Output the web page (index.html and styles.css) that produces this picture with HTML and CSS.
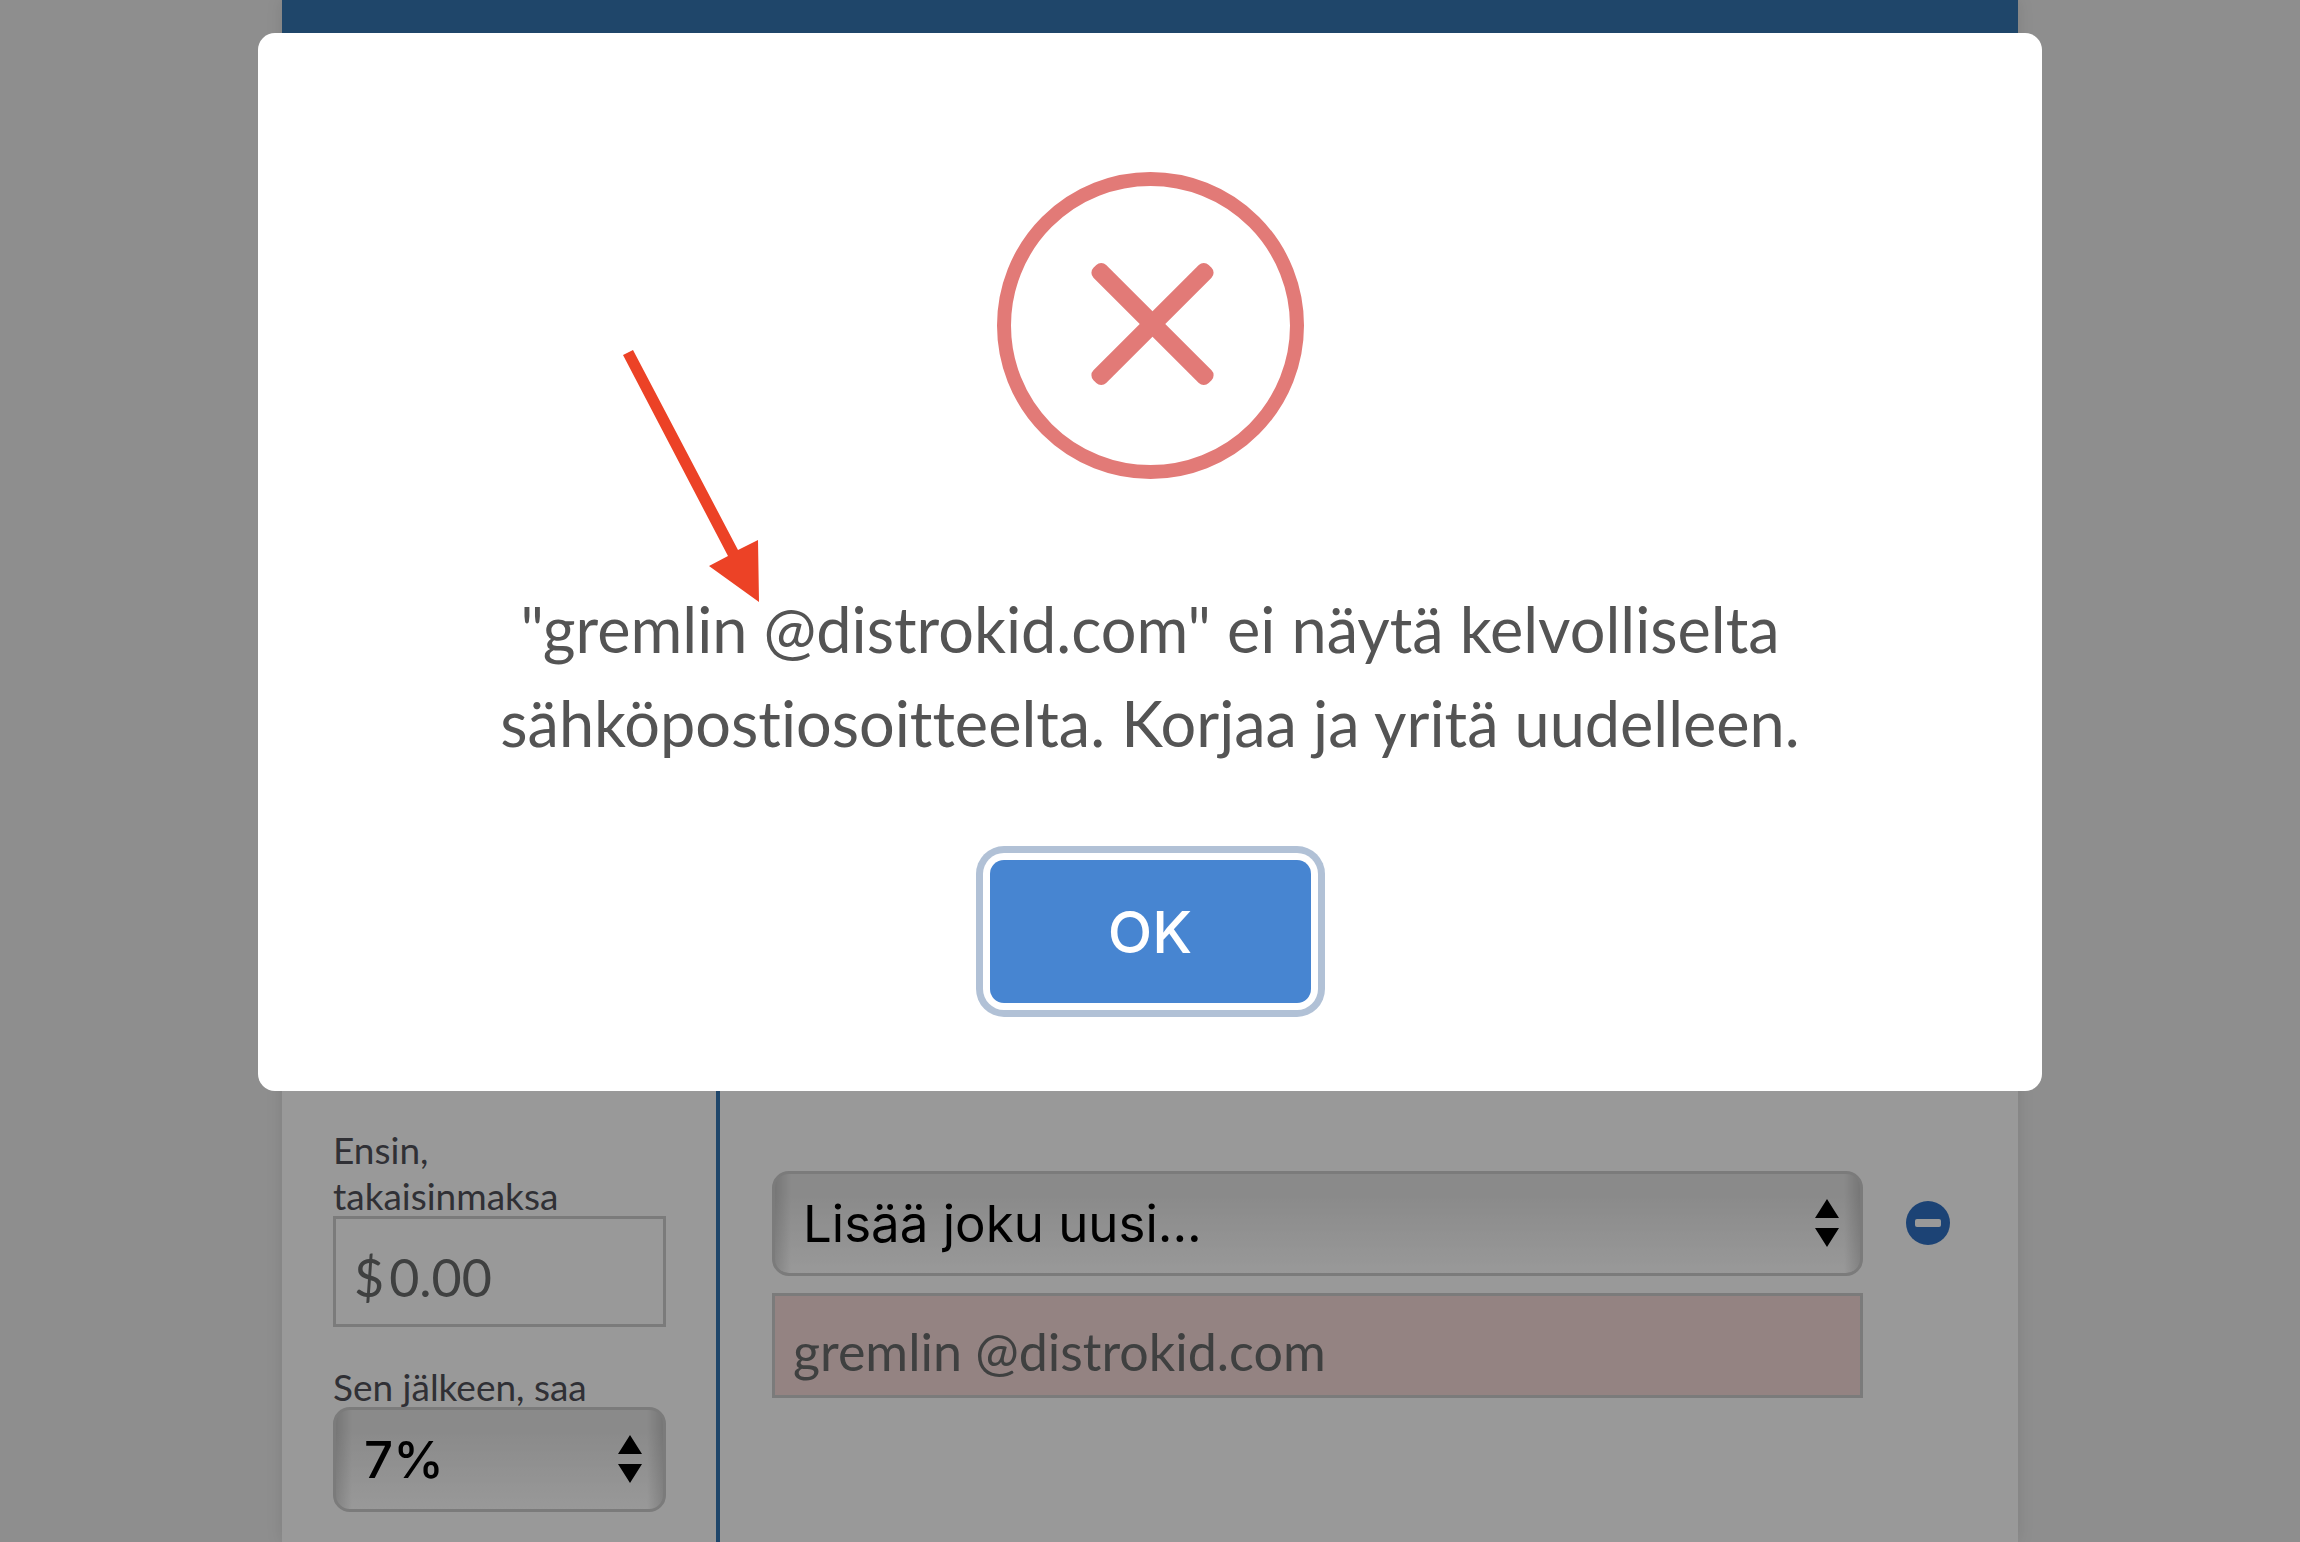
FILE: index.html
```
<!DOCTYPE html>
<html lang="fi">
<head>
    <meta charset="UTF-8">
    <meta name="viewport" content="width=device-width, initial-scale=1.0">
    <title>Splits</title>
    <link rel="stylesheet" href="styles.css">
</head>
<body>
    <div class="page">
        <div class="page-header"></div>
        <div class="split">
            <!-- Share -->
            <div class="share">
                <label class="label" for="recoup">Ensin,<br>takaisinmaksa</label>
                <div class="money">
                    <span>$</span>
                    <input type="text" id="recoup" value="0.00">
                </div>
                <label class="label" for="percent">Sen jälkeen, saa</label>
                <div class="select-box">
                    <select class="percent" id="percent">
                        <option>7%</option>
                    </select>
                    <svg class="arrows" viewBox="0 0 24 48">
                        <path d="M12 0L24 19H0zM12 48L24 29H0z"/>
                    </svg>
                </div>
            </div>
            <!-- Person -->
            <div class="person">
                <div class="person-fields">
                    <div class="select-box">
                        <select id="who" aria-label="Kuka">
                            <option>Lisää joku uusi...</option>
                        </select>
                        <svg class="arrows" viewBox="0 0 24 48">
                            <path d="M12 0L24 19H0zM12 48L24 29H0z"/>
                        </svg>
                    </div>
                    <input class="email error" type="text" aria-label="Sähköposti" value="gremlin @distrokid.com">
                </div>
                <button class="remove" aria-label="Poista">
                    <svg viewBox="0 0 44 44">
                        <circle cx="22" cy="22" r="22" fill="#2f70c3"/>
                        <rect x="9" y="18" width="26" height="8" rx="2" fill="#fff"/>
                    </svg>
                </button>
            </div>
        </div>
    </div>

    <div class="overlay">
        <div class="modal" role="dialog" aria-modal="true" aria-labelledby="message">
            <svg class="icon-error" viewBox="0 0 307 307">
                <circle cx="153.5" cy="153.5" r="146.5" fill="none" stroke="#e27a77" stroke-width="14"/>
                <g fill="#e27a77">
                    <rect x="74" y="143" width="163" height="18" rx="7" transform="rotate(45 155.500 152)"/>
                    <rect x="74" y="143" width="163" height="18" rx="7" transform="rotate(-45 155.500 152)"/>
                </g>
            </svg>
            <p class="message" id="message">"gremlin @distrokid.com" ei näytä kelvolliselta sähköpostiosoitteelta. Korjaa ja yritä uudelleen.</p>
            <button class="ok">OK</button>
            <svg class="pointer" viewBox="0 0 137 252">
                <path d="M0 5L10 0L115 200L135 190L136 252L86 216L105 206z" fill="#ec4226"/>
            </svg>
        </div>
    </div>
</body>
</html>
```
FILE: styles.css
```
* {
    box-sizing: border-box;
}
body {
    margin: 0;
    height: 100vh;
    overflow: hidden;
    background-color: #ededed;
    font-family: Lato, sans-serif;
    font-variant-ligatures: none;
    color: #505159;
}
input, select, button {
    font-family: inherit;
    margin: 0;
}

.page {
    display: flex;
    flex-direction: column;
    min-height: 100vh;
    margin: 0 282px;
    background-color: #fff;
    box-shadow: 0 0 16px rgba(0, 0, 0, 0.1);
}
.page-header {
    height: 100px;
    background-color: #3575b1;
}
.split {
    flex: 1;
    display: flex;
}
.share {
    width: 438px;
    padding: 1027px 50px 0 51px;
    border-right: 4px solid #3575b1;
}
.label {
    display: block;
    margin-bottom: -3px;
    font-size: 37px;
    line-height: 46px;
}
.money {
    display: flex;
    align-items: center;
    height: 111px;
    margin-bottom: 37px;
    padding: 10px 18px 0;
    border: 3px solid #cdcdcd;
    font-size: 52px;
    color: #696c6c;
}
.money input {
    width: 100%;
    min-width: 0;
    padding: 0 0 0 5px;
    border: 0;
    background: none;
    font-size: 52px;
    color: #696c6c;
}

.select-box {
    position: relative;
}
select {
    appearance: none;
    display: block;
    width: 100%;
    height: 105px;
    padding: 0 28px;
    border: 3px solid #cdcdcd;
    border-radius: 17px;
    background:
        linear-gradient(to right, rgba(0, 0, 0, 0.14), transparent 16px),
        linear-gradient(to left, rgba(0, 0, 0, 0.14), transparent 16px),
        linear-gradient(#e6e6e6 20%, #fff);
    font-family: Inter, sans-serif;
    font-size: 51px;
    color: #000;
}
.percent {
    font-weight: 500;
}
.arrows {
    position: absolute;
    top: 28px;
    right: 24px;
    width: 24px;
    height: 48px;
    pointer-events: none;
}

.person {
    flex: 1;
    display: flex;
    align-items: flex-start;
    padding: 1071px 68px 0 52px;
}
.person-fields {
    flex: 1;
    display: flex;
    flex-direction: column;
    gap: 17px;
}
.email {
    width: 100%;
    height: 105px;
    padding: 10px 18px 0;
    border: 3px solid #cdcdcd;
    font-size: 52px;
    color: #696c6c;
}
.email.error {
    background-color: #f7dad9;
}
.remove {
    width: 44px;
    height: 44px;
    margin: 30px 0 0 43px;
    padding: 0;
    border: 0;
    background: none;
    cursor: pointer;
}
.remove svg {
    display: block;
}

.overlay {
    position: fixed;
    inset: 0;
    padding: 33px 258px;
    background-color: rgba(0, 0, 0, 0.4);
}
.modal {
    position: relative;
    display: flex;
    flex-direction: column;
    align-items: center;
    padding: 139px 200px 88px;
    border-radius: 17px;
    background-color: #fff;
}
.icon-error {
    width: 307px;
    height: 307px;
}
.message {
    max-width: 1384px;
    margin: 103px 0 90px;
    font-size: 63px;
    line-height: 94px;
    text-align: center;
    color: #545454;
}
.ok {
    width: 321px;
    height: 143px;
    border: 0;
    border-radius: 14px;
    background-color: #4785d1;
    box-shadow: 0 0 0 7px #fff, 0 0 0 14px #b1c1d6;
    font-family: Inter, sans-serif;
    font-size: 58px;
    font-weight: 500;
    color: #fff;
    cursor: pointer;
}
/* red arrow that points at the space in the address */
.pointer {
    position: absolute;
    top: 317px;
    left: 365px;
    width: 137px;
    height: 252px;
}
```
